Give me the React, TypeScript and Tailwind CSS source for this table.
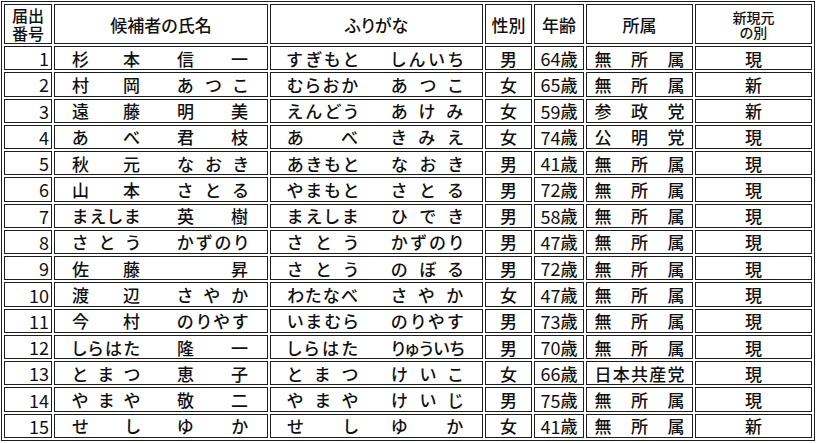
import React from "react";

type Row = {
  no: number;
  name: string;
  kana: string;
  sex: string;
  age: string;
  party: string;
  status: string;
};

const rows: Row[] = [
  { no: 1, name: "杉本 信一", kana: "すぎもと しんいち", sex: "男", age: "64", party: "無所属", status: "現" },
  { no: 2, name: "村岡 あつこ", kana: "むらおか あつこ", sex: "女", age: "65", party: "無所属", status: "新" },
  { no: 3, name: "遠藤 明美", kana: "えんどう あけみ", sex: "女", age: "59", party: "参政党", status: "新" },
  { no: 4, name: "あべ 君枝", kana: "あべ きみえ", sex: "女", age: "74", party: "公明党", status: "現" },
  { no: 5, name: "秋元 なおき", kana: "あきもと なおき", sex: "男", age: "41", party: "無所属", status: "現" },
  { no: 6, name: "山本 さとる", kana: "やまもと さとる", sex: "男", age: "72", party: "無所属", status: "現" },
  { no: 7, name: "まえしま 英樹", kana: "まえしま ひでき", sex: "男", age: "58", party: "無所属", status: "現" },
  { no: 8, name: "さとう かずのり", kana: "さとう かずのり", sex: "男", age: "47", party: "無所属", status: "現" },
  { no: 9, name: "佐藤 昇", kana: "さとう のぼる", sex: "男", age: "72", party: "無所属", status: "現" },
  { no: 10, name: "渡辺 さやか", kana: "わたなべ さやか", sex: "女", age: "47", party: "無所属", status: "現" },
  { no: 11, name: "今村 のりやす", kana: "いまむら のりやす", sex: "男", age: "73", party: "無所属", status: "現" },
  { no: 12, name: "しらはた 隆一", kana: "しらはた りゅういち", sex: "男", age: "70", party: "無所属", status: "現" },
  { no: 13, name: "とまつ 恵子", kana: "とまつ けいこ", sex: "女", age: "66", party: "日本共産党", status: "現" },
  { no: 14, name: "やまや 敬二", kana: "やまや けいじ", sex: "男", age: "75", party: "無所属", status: "現" },
  { no: 15, name: "せし ゆか", kana: "せし ゆか", sex: "女", age: "41", party: "無所属", status: "新" },
];

const cell = "border border-[#1e1e1e] flex items-center min-w-0";
const digits = "font-['Liberation_Sans_Narrow','Noto_Sans_CJK_JP',sans-serif] font-normal text-[18px]";

function Spread({ text, className }: { text: string; className: string }) {
  const chars = Array.from(text);
  return (
    <div className={`flex shrink-0 ${chars.length === 1 ? "justify-end" : "justify-between"} ${className}`}>
      {chars.map((c, i) => (
        <span key={i}>{c}</span>
      ))}
    </div>
  );
}

export default function App() {
  return (
    <div className="bg-white w-[820px] h-[443px] text-[#111] font-['Noto_Sans_CJK_JP',sans-serif] font-medium text-[17px] leading-none [font-feature-settings:'palt']">
      <div className="grid w-[814px] h-[440px] ml-px mt-px border border-[#1e1e1e] p-[2px] gap-[2px] grid-cols-[48px_214px_213px_47px_50px_107px_117px] grid-rows-[40px_repeat(15,1fr)]">
        <div className={`${cell} justify-center text-center whitespace-pre-line text-[16px] leading-[18px]`}>
          {"届出\n番号"}
        </div>
        <div className={`${cell} justify-center`}>候補者の氏名</div>
        <div className={`${cell} justify-center`}>ふりがな</div>
        <div className={`${cell} justify-center`}>性別</div>
        <div className={`${cell} justify-center`}>年齢</div>
        <div className={`${cell} justify-center`}>所属</div>
        <div className={`${cell} justify-center text-center whitespace-pre-line text-[14px] leading-[15px] pt-[1px]`}>
          {"新現元\nの別"}
        </div>

        {rows.map((r) => {
          const [s1, g1] = r.name.split(" ");
          const [s2, g2] = r.kana.split(" ");
          return (
            <React.Fragment key={r.no}>
              <div className={`${cell} justify-end pr-[2px] ${digits}`}>{r.no}</div>
              <div className={`${cell} pl-[17px]`}>
                <Spread text={s1} className="w-[68px]" />
                <div className="w-[37px] shrink-0" />
                <Spread text={g1} className="w-[71px]" />
              </div>
              <div className={`${cell} pl-[16px]`}>
                <Spread text={s2} className="w-[71px]" />
                <div className="w-[33px] shrink-0" />
                <Spread text={g2} className="w-[72px]" />
              </div>
              <div className={`${cell} justify-center`}>{r.sex}</div>
              <div className={`${cell} justify-center`}>
                <span className={digits}>{r.age}</span>
                <span>歳</span>
              </div>
              <div className={`${cell} justify-center`}>
                <Spread text={r.party} className="w-[90px]" />
              </div>
              <div className={`${cell} justify-center`}>{r.status}</div>
            </React.Fragment>
          );
        })}
      </div>
    </div>
  );
}
